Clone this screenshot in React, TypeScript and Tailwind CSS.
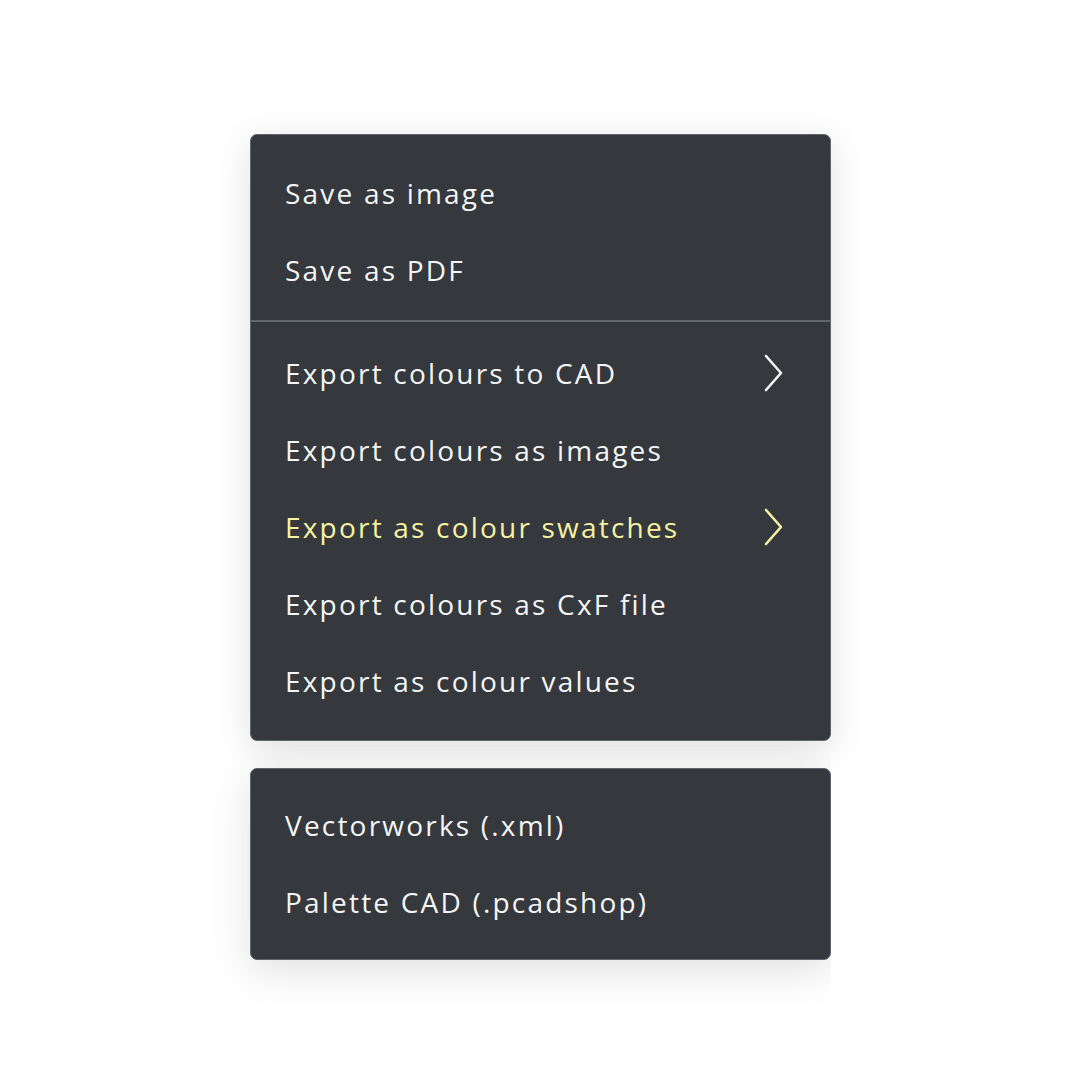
import React from "react";

const Chevron = ({ color }: { color: string }) => (
  <svg width="19" height="38" viewBox="0 0 19 38" fill="none" className="shrink-0">
    <path d="M2 2 L17 19 L2 36" stroke={color} strokeWidth="2.6" strokeLinecap="round" strokeLinejoin="round" />
  </svg>
);

const Item = ({ label, chevron, active }: { label: string; chevron?: boolean; active?: boolean }) => (
  <div className="flex h-[77px] items-center justify-between pb-[4px] pl-[34px] pr-[47px]">
    <span className={active ? "text-[#f6f2a2]" : "text-[#f4f5f6]"}>{label}</span>
    {chevron && <Chevron color={active ? "#f6f2a2" : "#f4f5f6"} />}
  </div>
);

export default function App() {
  return (
    <div
      className="relative h-[1080px] w-[1080px] overflow-hidden bg-white"
      style={{ fontFamily: '"Open Sans", "Noto Sans", sans-serif' }}
    >
      <div className="pt-[134px] pl-[250px]">
        <div className="w-[581px] rounded-[7px] border border-[#5e676f] bg-[#35383d] text-[28px] tracking-[2.2px] shadow-[0_8px_36px_rgba(0,0,0,0.13)]">
          <div className="pt-[21px] pb-[10px]">
            <Item label="Save as image" />
            <Item label="Save as PDF" />
          </div>
          <div className="h-[2px] bg-[#5f676e]" />
          <div className="pt-[14px] pb-[19px]">
            <Item label="Export colours to CAD" chevron />
            <Item label="Export colours as images" />
            <Item label="Export as colour swatches" chevron active />
            <Item label="Export colours as CxF file" />
            <Item label="Export as colour values" />
          </div>
        </div>
      </div>
      <div className="h-[340px] w-[831px] overflow-hidden pt-[27px] pl-[250px]">
        <div className="w-[581px] rounded-[7px] border border-[#5e676f] bg-[#35383d] text-[28px] tracking-[2.2px] shadow-[0_10px_44px_rgba(0,0,0,0.13)]">
          <div className="pt-[19px] pb-[17px]">
            <Item label="Vectorworks (.xml)" />
            <Item label="Palette CAD (.pcadshop)" />
          </div>
        </div>
      </div>
    </div>
  );
}
